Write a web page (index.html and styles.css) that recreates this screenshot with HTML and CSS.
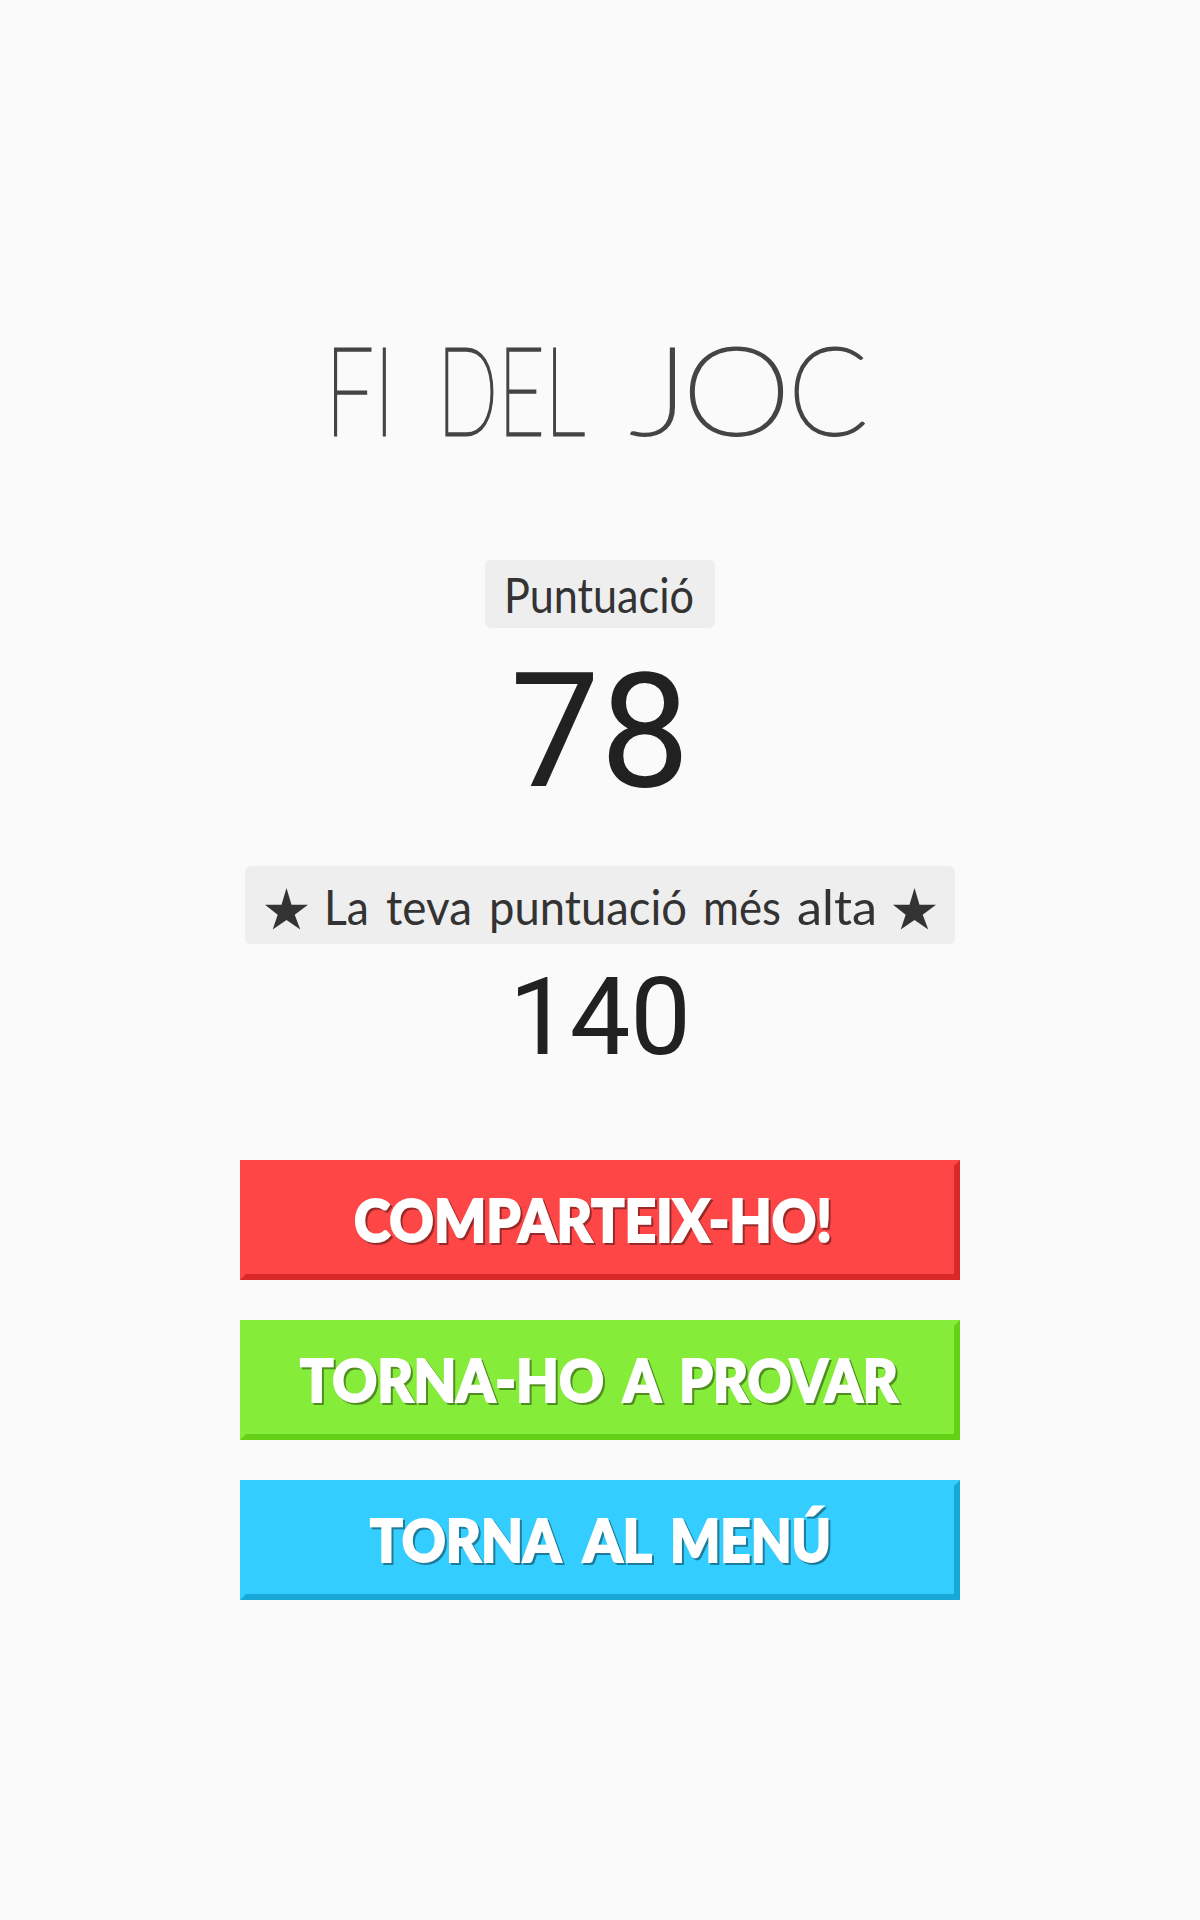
FILE: index.html
```html
<!DOCTYPE html>
<html lang="ca">
<head>
<meta charset="utf-8">
<title>Fi del joc</title>
<link rel="stylesheet" href="styles.css">
</head>
<body>
<main class="screen">
  <h1 class="title">
    <svg class="art" width="540" height="120" viewBox="330 330 540 120">
      <text x="325" y="434.5" textLength="70" lengthAdjust="spacingAndGlyphs">FI</text>
      <text x="437" y="434.5" textLength="148" lengthAdjust="spacingAndGlyphs">DEL</text>
      <text y="434.5"><tspan x="630" textLength="59" lengthAdjust="spacingAndGlyphs">J</tspan><tspan x="682" textLength="109" lengthAdjust="spacingAndGlyphs">O</tspan><tspan x="788" textLength="80" lengthAdjust="spacingAndGlyphs">C</tspan></text>
    </svg>
  </h1>
  <div class="pill pill-score">
    <svg class="art" width="230" height="68" viewBox="485 560 230 68">
      <text x="504" y="612.5" textLength="190" lengthAdjust="spacingAndGlyphs">Puntuació</text>
    </svg>
  </div>
  <div class="score">78</div>
  <div class="pill pill-best">
    <svg class="art" width="710" height="78" viewBox="245 866 710 78">
      <path d="M286.5 888l5 16.8H308l-13.3 10 5.6 14.6-13.8-9.5-13.8 9.5 5-14.6-12.7-10h16.5z"/>
      <text x="324" y="925" textLength="45" lengthAdjust="spacingAndGlyphs">La</text>
      <text x="386" y="925" textLength="86" lengthAdjust="spacingAndGlyphs">teva</text>
      <text x="489" y="925" textLength="198" lengthAdjust="spacingAndGlyphs">puntuació</text>
      <text x="703" y="925" textLength="78" lengthAdjust="spacingAndGlyphs">més</text>
      <text x="797" y="925" textLength="80" lengthAdjust="spacingAndGlyphs">alta</text>
      <path d="M914.5 888l5 16.8H936l-13.3 10 5.6 14.6-13.8-9.5-13.8 9.5 5-14.6-12.7-10h16.5z"/>
    </svg>
  </div>
  <div class="best">140</div>
  <nav class="actions">
    <button class="btn red">
      <svg class="art" width="714" height="114" viewBox="240 1160 714 114">
        <text x="354" y="1241.5" textLength="478" lengthAdjust="spacingAndGlyphs">COMPARTEIX-HO!</text>
      </svg>
    </button>
    <button class="btn green">
      <svg class="art" width="714" height="114" viewBox="240 1320 714 114">
        <text x="300" y="1401.5" textLength="304" lengthAdjust="spacingAndGlyphs">TORNA-HO</text>
        <text x="623" y="1401.5" textLength="38" lengthAdjust="spacingAndGlyphs">A</text>
        <text x="679" y="1401.5" textLength="219" lengthAdjust="spacingAndGlyphs">PROVAR</text>
      </svg>
    </button>
    <button class="btn blue">
      <svg class="art" width="714" height="114" viewBox="240 1480 714 114">
        <text x="370" y="1561.5" textLength="191" lengthAdjust="spacingAndGlyphs">TORNA</text>
        <text x="583" y="1561.5" textLength="69" lengthAdjust="spacingAndGlyphs">AL</text>
        <text x="670" y="1561.5" textLength="161" lengthAdjust="spacingAndGlyphs">MENÚ</text>
      </svg>
    </button>
  </nav>
</main>
</body>
</html>
```
FILE: styles.css
```css
* { box-sizing: border-box; }
body {
  margin: 0;
  background: #fafafa;
  font-family: Lato, "Liberation Sans", sans-serif;
}
.screen {
  display: flex;
  flex-direction: column;
  align-items: center;
  height: 1920px;
  padding-top: 330px;
}
.art { display: block; overflow: visible; }
.title {
  margin: 0 0 110px;
  font-size: 122.5px;
  font-weight: 200;
  fill: #444;
  stroke: #444;
  stroke-width: 2.9px;
}
.pill {
  border-radius: 6px;
  background: #eee;
  fill: #333;
  font-size: 48px;
}
.score, .best {
  font-family: Roboto, sans-serif;
  color: #212121;
}
.score {
  padding-top: 1px;
  margin-bottom: 31px;
  font-size: 160px;
  line-height: 206px;
}
.best {
  margin-bottom: 70px;
  font-size: 108px;
  line-height: 146px;
}
.actions {
  display: flex;
  flex-direction: column;
  gap: 40px;
}
.btn {
  width: 720px;
  height: 120px;
  padding: 0;
  border: 6px solid transparent;
  font-family: inherit;
  font-size: 59px;
  font-weight: 900;
  fill: #fff;
  stroke: #fff;
  stroke-width: 2px;
}
.btn .art { margin: -6px 0 0 -6px; }
.btn text { filter: drop-shadow(2px 2px 0 rgba(0, 0, 0, .4)); }
.red { background: #ff4646; border-color: #ff4646 #d92828 #d92828 #ff4646; }
.green { background: #85ed3a; border-color: #85ed3a #64d016 #64d016 #85ed3a; }
.blue { background: #33ceff; border-color: #33ceff #18a8d8 #18a8d8 #33ceff; }
```
